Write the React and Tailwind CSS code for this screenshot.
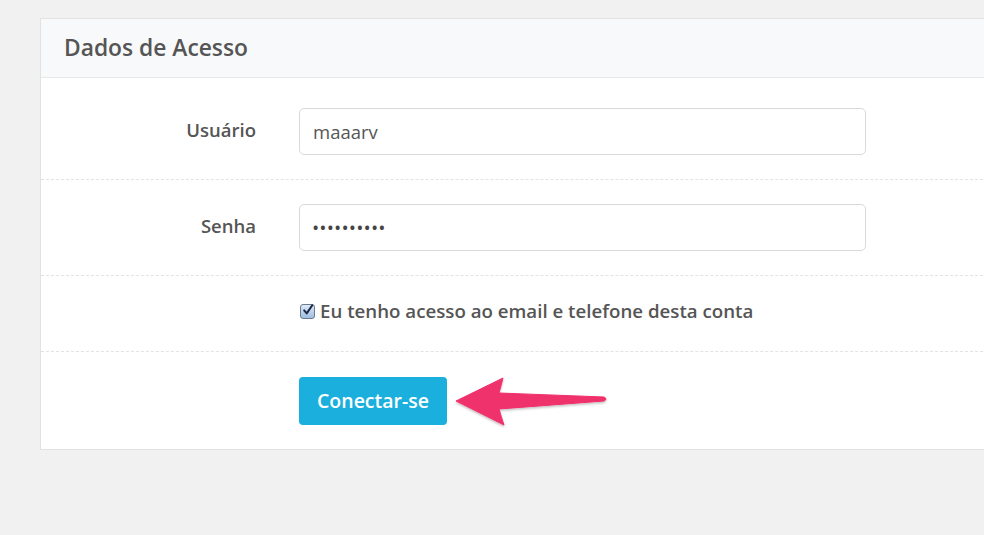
const Row = ({ label, children, className = "" }) => (
  <div className={`flex items-center mr-[11px] border-b border-dashed border-[#e3e3e3] ${className}`}>
    <div className="w-[215px] text-right text-[18.5px] font-semibold text-[#555] -mt-[3px]">{label}</div>
    <div className="ml-[43px]">{children}</div>
  </div>
);

const Field = ({ children, dots }) => (
  <div className="w-[567px] h-[47px] flex items-center px-[13px] border border-[#d9d9d9] rounded-[5px] bg-white">
    <span className={dots ? "text-[14px] tracking-[2.1px] text-[#444] font-bold" : "text-[18.5px] text-[#555]"}>
      {children}
    </span>
  </div>
);

export default function App() {
  return (
    <div
      className="w-[984px] h-[535px] overflow-hidden bg-[#f1f1f1] pt-[18px]"
      style={{ fontFamily: '"Open Sans", "Noto Sans", sans-serif' }}
    >
      <div className="relative ml-[40px] w-[980px] bg-white border border-[#e2e2e2]">
        <div className="h-[59px] flex items-center pl-[23px] bg-[#f8f9fa] border-b border-[#e6e8ea]">
          <h2 className="text-[22.8px] font-semibold text-[#555]">Dados de Acesso</h2>
        </div>
        <div className="pt-[6px]">
          <Row label="Usuário" className="pt-[24px] pb-[24px]">
            <Field>maaarv</Field>
          </Row>
          <Row label="Senha" className="pt-[24px] pb-[24px]">
            <Field dots>••••••••••</Field>
          </Row>
          <div className="h-[76px] flex items-center mr-[11px] border-b border-dashed border-[#e3e3e3] pl-[259px] pb-[4px]">
            <span className="w-[15px] h-[15px] rounded-[3px] border border-[#6b7a8c] bg-gradient-to-b from-[#dfeaf6] to-[#9fbde0] flex items-center justify-center mr-[5px]">
              <svg width="14" height="14" viewBox="0 0 14 14" className="-mt-[3px] ml-[1px]">
                <path d="M2.5 7.5 L5.5 11 L12 1.5" fill="none" stroke="#1d2b4a" strokeWidth="2.4" strokeLinecap="round" strokeLinejoin="round" />
              </svg>
            </span>
            <span className="text-[18.7px] font-semibold text-[#555]">Eu tenho acesso ao email e telefone desta conta</span>
          </div>
          <div className="flex items-center pl-[258px] pt-[25px] pb-[24px]">
            <button className="w-[148px] h-[48px] rounded-[4px] bg-[#1aafdd] text-white text-[19.5px] font-semibold">
              Conectar-se
            </button>
          </div>
        </div>
        <svg className="absolute left-[410px] top-[353px]" width="160" height="56" viewBox="0 0 160 56">
          <defs>
            <filter id="sh" x="-10%" y="-20%" width="120%" height="150%">
              <feDropShadow dx="0" dy="1.5" stdDeviation="1.2" floodColor="#000" floodOpacity="0.25" />
            </filter>
          </defs>
          <path
            d="M5 29 L52 6 Q50 14 48 21 L153 25 Q157 27 153 29 L48 37 Q50 44 53 53 Z"
            fill="#f0306c"
            stroke="#f0306c"
            strokeWidth="1"
            strokeLinejoin="round"
            filter="url(#sh)"
          />
        </svg>
      </div>
    </div>
  );
}
